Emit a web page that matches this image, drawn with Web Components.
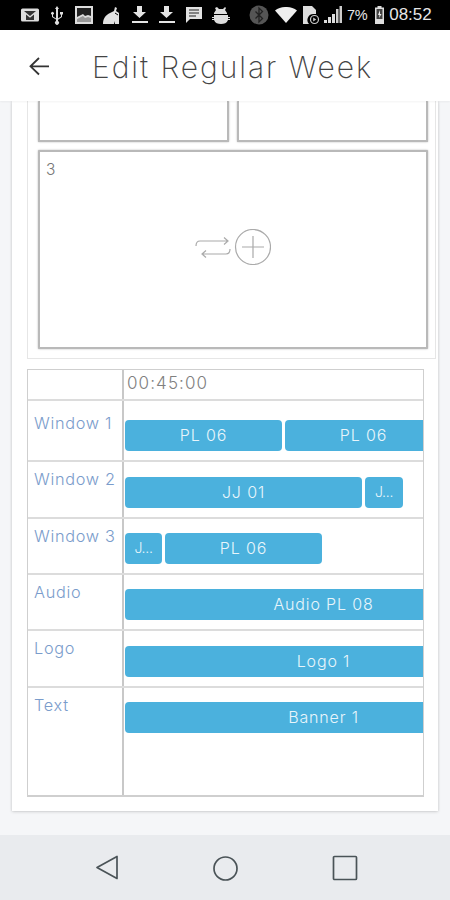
<!DOCTYPE html>
<html><head><meta charset="utf-8">
<style>
html,body{margin:0;padding:0;width:450px;height:900px;overflow:hidden;background:#f5f6f8;font-family:Inter,"Liberation Sans",sans-serif}
body{display:flex;flex-direction:column}
</style></head><body>
<status-bar></status-bar>
<app-bar title="Edit Regular Week"></app-bar>
<page-body>
  <slot-panel></slot-panel>
  <time-table>
    <time-row label="Window 1" h="61" pad="19" lpad="12"><time-bar w="157">PL 06</time-bar><time-bar w="157">PL 06</time-bar></time-row>
    <time-row label="Window 2" h="57" pad="15" lpad="7"><time-bar w="237">JJ 01</time-bar><time-bar w="38" short>J...</time-bar></time-row>
    <time-row label="Window 3" h="56" pad="14" lpad="7"><time-bar w="37" short>J...</time-bar><time-bar w="157">PL 06</time-bar></time-row>
    <time-row label="Audio" h="56" pad="14" lpad="7"><time-bar w="397">Audio PL 08</time-bar></time-row>
    <time-row label="Logo" h="57" pad="15" lpad="7"><time-bar w="397">Logo 1</time-bar></time-row>
    <time-row label="Text" h="107" pad="14" lpad="7"><time-bar w="397">Banner 1</time-bar></time-row>
  </time-table>
</page-body>
<nav-bar></nav-bar>
<script>
function def(name, css, html, extra){
  customElements.define(name, class extends HTMLElement{
    connectedCallback(){
      if(this.shadowRoot) return;
      const r=this.attachShadow({mode:'open'});
      r.innerHTML='<style>'+css+'</style>'+(typeof html==='function'?html(this):html);
      if(extra) extra(this,r);
    }
  });
}
def('status-bar',`:host{display:flex;height:30px;flex:none;background:#000;align-items:center;color:#e6e6e6;padding-left:20px;box-sizing:border-box;font-family:"Liberation Sans",sans-serif}
svg{display:block;flex:none}
.p{font-size:14.500px;letter-spacing:-.4px;margin-left:5px}
.t{font-size:17px;margin-left:4px}`,
`<svg width="20" height="16" viewBox="0 0 20 16"><rect x="1" y="1.500" width="18" height="13" rx="1.500" fill="#ddd"/><rect x="4" y="4" width="12" height="9" fill="#333"/><path d="M4 4l6 5 6-5v9h-2V7.500l-4 3.300-4-3.300V13H4z" fill="#ddd"/></svg>
<svg style="margin-left:10px" width="14" height="20" viewBox="0 0 14 20"><path d="M7 1l2 3H8v9.500l3-2V9.500h-1V7h3v2.500h-1v2.600l-4 2.700V16a2 2 0 1 1-2 0v-1.500L2 12V9.600a1.400 1.400 0 1 1 1 0V11.400l3 2V4H5z" fill="#ddd"/></svg>
<svg style="margin-left:10px" width="20" height="20" viewBox="0 0 20 20"><path d="M1 1h18v18H1z" fill="#ddd"/><path d="M3 3h14v8l-3-1-3 1-2-2-6 3z" fill="#222"/><path d="M3 14l6-3 2 2 3-1 3 1v4H3z" fill="#999"/></svg>
<svg style="margin-left:8px" width="20" height="20" viewBox="0 0 20 20"><path d="M1 19c0-6 3-9 7-11l4-2 1-4 2 1-1 3 3 2v11h-4v-3l-1 3z" fill="#e2e2e2"/><path d="M13 8l3 2" stroke="#000" stroke-width="1"/></svg>
<svg style="margin-left:9px" width="18" height="20" viewBox="0 0 18 20"><path d="M6 1h5v6h4l-6.500 6L2 7h4zM1 16h16v2H1z" fill="#e4e4e4"/></svg>
<svg style="margin-left:9px" width="18" height="20" viewBox="0 0 18 20"><path d="M6 1h5v6h4l-6.500 6L2 7h4zM1 16h16v2H1z" fill="#e4e4e4"/></svg>
<svg style="margin-left:9px" width="18" height="18" viewBox="0 0 18 18"><path d="M1 1h16v12H5l-4 4z" fill="#e2e2e2"/><path d="M4 4h10M4 7h10M4 10h7" stroke="#222" stroke-width="1"/></svg>
<svg style="margin-left:9px" width="18" height="20" viewBox="0 0 18 20"><path d="M5 2l2 2h4l2-2 1 1-1 2 2 3v1H2V8l2-3-1-2zM2 10h14v2h2v1h-2v1h2v1h-2c-1 3-4 4-7 4s-6-1-7-4H0v-1h2v-1H0v-1h2z" fill="#ddd"/></svg>
<svg style="margin-left:19px" width="20" height="20" viewBox="0 0 20 20"><circle cx="10" cy="10" r="9.500" fill="#555"/><path d="M6.500 6.500l7 7L10 17V3l3.500 3.500-7 7" fill="none" stroke="#222" stroke-width="1.300"/></svg>
<svg style="margin-left:6px" width="22" height="16" viewBox="0 0 22 16"><path d="M0 3.500C6-1.200 16-1.200 22 3.500L11 16z" fill="#eee"/></svg>
<svg style="margin-left:5px" width="18" height="20" viewBox="0 0 18 20"><path d="M1 1h9l4 4v4h-2a6 6 0 0 0-5 10H1z" fill="#ddd"/><circle cx="12.500" cy="14.500" r="4" fill="none" stroke="#ccc" stroke-width="1.200"/><path d="M11.200 12.500l3 2-3 2z" fill="#ccc"/></svg>
<svg style="margin-left:4px" width="18" height="20" viewBox="0 0 18 20"><path d="M0 15h3v3H0zM4 12h3v6H4zM8 9h3v9H8z" fill="#ddd"/><path d="M12 4h2.500v14H12zM15.500 1H18v17h-2.500z" fill="#ccc"/></svg>
<span class="p">7%</span>
<svg style="margin-left:7px" width="11" height="20" viewBox="0 0 11 20"><path d="M3.500 1h4v1.500H10V19H1V2.500h2.500z" fill="#ddd"/><path d="M2.500 4h6v10h-6z" fill="#444"/><path d="M6 5L4 10h1.500L5 13l2.500-4H6z" fill="#eee"/></svg>
<span class="t">08:52</span>`);
def('app-bar',`:host{display:flex;height:71px;flex:none;background:#fff;align-items:center;box-sizing:border-box;padding-left:28px;position:relative;z-index:2;box-shadow:0 1px 2px rgba(0,0,0,.05)}
svg{display:block;flex:none}
h1{margin:2px 0 0 42px;font:250 30px Inter,sans-serif;letter-spacing:1.950px;color:#444;white-space:nowrap}`,
t=>`<svg width="22" height="22" viewBox="0 0 22 22"><path d="M21 11.300H2M11 3l-8.500 8.300L11 19.500" fill="none" stroke="#333" stroke-width="1.800"/></svg><h1>${t.getAttribute('title')}</h1>`);
def('page-body',`:host{display:block;flex:1;min-height:0;box-sizing:border-box;padding:0 12px;background:#f5f6f8}
.card{background:#fff;height:710px;box-shadow:0 1px 3px rgba(0,0,0,.14),-1px 0 2px rgba(0,0,0,.05),1px 0 2px rgba(0,0,0,.05);box-sizing:border-box;padding-left:15px}`,
`<div class="card"><slot></slot></div>`);
def('slot-panel',`:host{display:block;width:409px;height:258px;box-sizing:border-box;border:1px solid #e6e6e6;border-top:0;padding:0 7px 0 10px}
.top{display:grid;grid-template-columns:191px 191px;gap:8px;height:41px}
.s{box-sizing:border-box;border:2.500px solid #b9b9b9;border-radius:1px;box-shadow:0 0 2px rgba(0,0,0,.3);background:#fff}
.top .s{border-top:0}
.big{height:199px;margin-top:8px;width:390px;position:relative;font:300 15.500px Inter,sans-serif;color:#777;display:flex;align-items:center;justify-content:center}
.n{position:absolute;left:6px;top:8px}
svg{display:block}`,
`<div class="top"><div class="s"></div><div class="s"></div></div>
<div class="s big"><span class="n">3</span>
<svg width="76" height="36" viewBox="0 0 76 36" style="margin-top:-6px" fill="none" stroke="#aaa"><path d="M1 17c0-3 1-5 4-5h27M29 8.500l4 3.500-4 3.500M35 20c0 3-1 5-4 5H8M11 21.500l-4 3.500 4 3.500" stroke-width="1.200"/><circle cx="58" cy="18" r="17.500" stroke-width="1.200"/><path d="M47 18h22M58 7v22" stroke-width="1.200"/></svg></div>`);
def('time-table',`:host{display:block;width:397px;box-sizing:border-box;margin-top:10px;border:1px solid #cfcfcf;border-bottom-width:2px}
.h{display:flex;height:29px;border-bottom:2px solid #dcdcdc;box-sizing:content-box}
.l{width:96px;border-right:2px solid #c8c8c8;flex:none;box-sizing:border-box}
.v{font:300 17px Inter,sans-serif;letter-spacing:1.100px;color:#808080;padding:3px 0 0 3px;box-sizing:border-box}`,
`<div class="h"><div class="l"></div><div class="v">00:45:00</div></div><slot></slot>`);
def('time-row',`:host{display:flex;box-sizing:border-box;border-bottom:2px solid #dcdcdc}
:host(:last-child){border-bottom:0}
.l{width:96px;flex:none;border-right:2px solid #c8c8c8;box-sizing:border-box;padding:0 0 0 6px;font:300 16.300px Inter,sans-serif;letter-spacing:.7px;color:#7a9ccb;line-height:20px;white-space:nowrap}
.c{flex:1;min-width:0;overflow:hidden;display:flex;gap:3px;padding-left:1px;align-items:flex-start}`,
t=>`<div class="l" style="padding-top:${t.getAttribute('lpad')}px">${t.getAttribute('label')}</div><div class="c" style="padding-top:${t.getAttribute('pad')}px"><slot></slot></div>`,
(t)=>{t.style.height=t.getAttribute('h')+'px'});
def('time-bar',`:host{display:flex;flex:none;height:31px;box-sizing:border-box;padding-bottom:2px;background:#4bb1dd;border-radius:4px;color:#e8f5fb;font:300 16px Inter,sans-serif;letter-spacing:.85px;align-items:center;justify-content:center;white-space:nowrap}
:host([short]){font-size:14px;letter-spacing:-.3px}`,
`<slot></slot>`,(t)=>{t.style.width=t.getAttribute('w')+'px'});
def('nav-bar',`:host{display:flex;height:65px;flex:none;background:#e9ebee;position:relative}
svg{position:absolute;display:block}`,
`<svg style="left:94px;top:20px" width="26" height="26" viewBox="0 0 26 26" fill="none" stroke="#4a5357" stroke-width="1.700"><path d="M23 1.500v22L3 12.500z" stroke-linejoin="round"/></svg>
<svg style="left:212px;top:20px" width="27" height="27" viewBox="0 0 27 27" fill="none" stroke="#4a5357" stroke-width="1.700"><circle cx="13.500" cy="13.500" r="11.500"/></svg>
<svg style="left:332px;top:20px" width="26" height="26" viewBox="0 0 26 26" fill="none" stroke="#4a5357" stroke-width="1.700"><rect x="1.500" y="1.500" width="23" height="23" rx="1"/></svg>`);
</script>
</body></html>
